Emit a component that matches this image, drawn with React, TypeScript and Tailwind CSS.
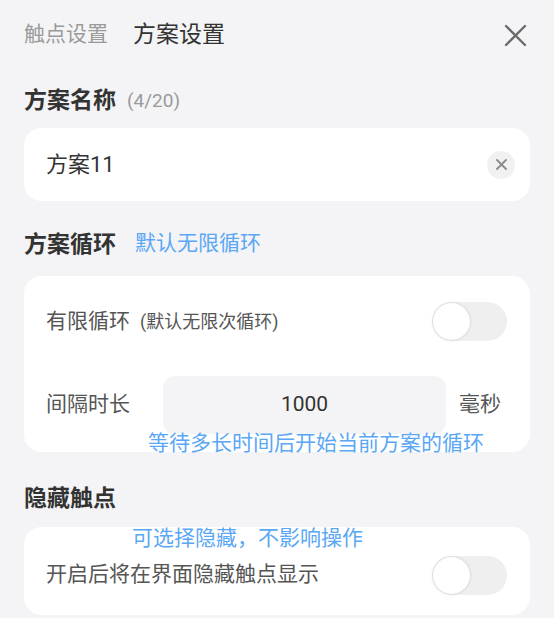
import { useState } from "react";

function Toggle({ on = false }: { on?: boolean }) {
  return (
    <div className="relative h-[39px] w-[75px] shrink-0 rounded-full bg-[#efefef]">
      <div
        className={
          "absolute top-[1px] h-[37px] w-[37px] rounded-full bg-white shadow-[0_0_3px_rgba(0,0,0,0.18)] " +
          (on ? "right-[1px]" : "left-[1px]")
        }
      />
    </div>
  );
}

export default function App() {
  const [name] = useState("方案11");

  return (
    <div
      className="h-[618px] w-[554px] overflow-hidden bg-[#f4f4f6] px-6 text-[#333]"
      style={{ fontFamily: '"Roboto", "Noto Sans CJK SC", sans-serif' }}
    >
      {/* Header tabs */}
      <div className="flex h-[70px] items-center pr-[3px]">
        <span className="text-[21px] text-[#9a9a9a]">触点设置</span>
        <span className="ml-[25px] text-[23px] text-[#333]">方案设置</span>
        <svg className="ml-auto" width="23" height="23" viewBox="0 0 23 23" fill="none">
          <path d="M2 2L21 21M21 2L2 21" stroke="#6b6b6b" strokeWidth="2.4" strokeLinecap="round" />
        </svg>
      </div>

      {/* Scheme name */}
      <div className="mt-4 flex h-[30px] items-center">
        <span className="text-[23px] font-bold">方案名称</span>
        <span className="ml-[11px] text-[19px] text-[#9a9a9a]">(4/20)</span>
      </div>
      <div className="mt-3 flex h-[73px] items-center rounded-[18px] bg-white pl-[22px] pr-[15px]">
        <span className="text-[22px] text-[#333]">{name}</span>
        <div className="ml-auto flex h-[28px] w-[28px] items-center justify-center rounded-full bg-[#f1f1f1]">
          <svg width="11" height="11" viewBox="0 0 11 11" fill="none">
            <path d="M1 1L10 10M10 1L1 10" stroke="#8a8a8a" strokeWidth="1.8" strokeLinecap="round" />
          </svg>
        </div>
      </div>

      {/* Scheme loop */}
      <div className="mt-[29px] flex h-[30px] items-center">
        <span className="text-[23px] font-bold">方案循环</span>
        <span className="ml-[19px] -mt-[3px] text-[21px] text-[#5aa7f5]">默认无限循环</span>
      </div>
      <div className="relative mt-4 flex flex-col rounded-[18px] bg-white pl-[22px] pr-[23px] pt-[26px] pb-[18px]">
        <div className="flex h-[39px] items-center">
          <span className="text-[21px] text-[#555]">有限循环</span>
          <span className="ml-[10px] text-[18px] text-[#555]">(默认无限次循环)</span>
          <div className="ml-auto">
            <Toggle />
          </div>
        </div>
        <div className="mt-[35px] flex h-[58px] items-center">
          <span className="w-[117px] shrink-0 text-[21px] text-[#555]">间隔时长</span>
          <div className="flex h-[58px] w-[283px] items-center justify-center rounded-[12px] bg-[#f4f4f6] text-[21px] text-[#333]">
            1000
          </div>
          <span className="ml-[13px] text-[21px] text-[#555]">毫秒</span>
        </div>
        <span className="absolute left-[124px] top-[155px] whitespace-nowrap text-[21px] leading-[24px] text-[#5aa7f5]">
          等待多长时间后开始当前方案的循环
        </span>
      </div>

      {/* Hide touch points */}
      <div className="mt-8 flex h-[30px] items-center">
        <span className="text-[23px] font-bold">隐藏触点</span>
      </div>
      <div className="relative mt-[13px] flex h-[88px] items-center rounded-[18px] bg-white pl-[22px] pr-[23px] pt-[8px]">
        <span className="text-[21px] text-[#555]">开启后将在界面隐藏触点显示</span>
        <div className="ml-auto">
          <Toggle />
        </div>
        <span className="absolute left-[108px] -top-[1px] whitespace-nowrap text-[21px] leading-[24px] text-[#5aa7f5]">
          可选择隐藏，不影响操作
        </span>
      </div>
    </div>
  );
}
